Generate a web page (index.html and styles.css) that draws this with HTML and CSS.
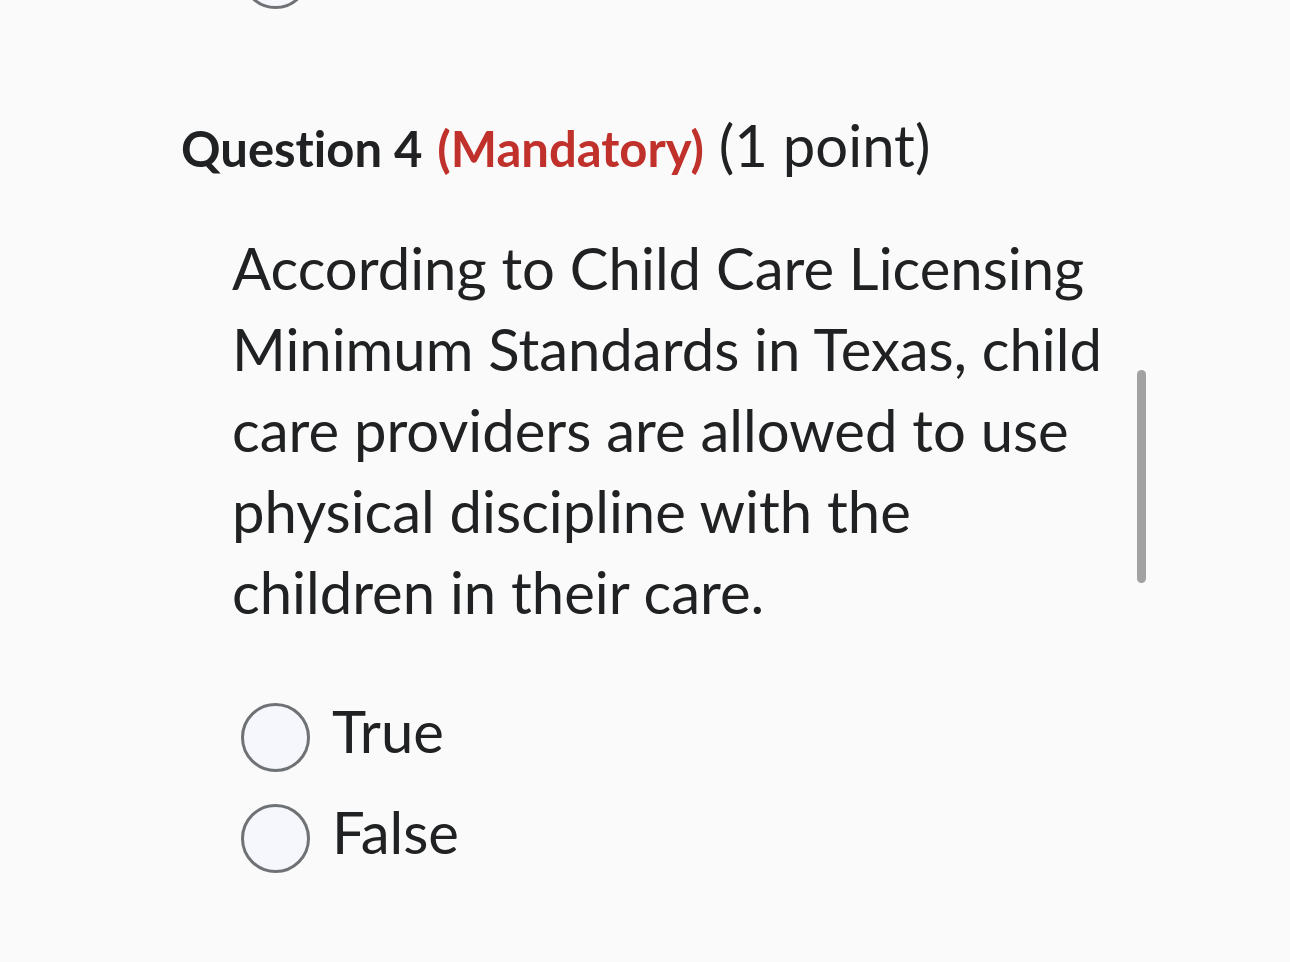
FILE: index.html
```html
<!DOCTYPE html>
<html>
<head>
<meta charset="utf-8">
<link rel="stylesheet" href="styles.css">
</head>
<body>
<div class="page">
  <div class="prev-option"><span class="radio"></span></div>
  <section class="question">
    <h2 class="q-title"><span class="q-label">Question 4</span> <span class="q-mand">(Mandatory)</span> <span class="q-points">(1 point)</span></h2>
    <p class="q-text">According to Child Care Licensing Minimum Standards in Texas, child care providers are allowed to use physical discipline with the children in their care.</p>
    <div class="options">
      <label class="option"><span class="radio"></span><span class="opt-text">True</span></label>
      <label class="option"><span class="radio"></span><span class="opt-text">False</span></label>
    </div>
  </section>
  <div class="scrollbar"></div>
</div>
</body>
</html>
```
FILE: styles.css
```css
html, body {
  margin: 0;
  padding: 0;
  background: #fafafa;
}
body {
  font-family: Lato, "Open Sans", sans-serif;
  color: #202122;
  font-variant-ligatures: none;
}
.page {
  position: relative;
  width: 1290px;
  height: 962px;
  overflow: hidden;
}
.prev-option {
  margin-top: -60px;
  padding-left: 241px;
  height: 69px;
}
.radio {
  display: block;
  box-sizing: border-box;
  width: 69px;
  height: 69px;
  border-radius: 50%;
  border: 3px solid #6f7274;
  background: #f5f7fd;
  flex: none;
}
.question {
  padding-left: 181px;
}
.q-title {
  margin: 96px 0 0;
  font-weight: 400;
  font-size: 58px;
  line-height: 80px;
  white-space: nowrap;
}
.q-label {
  font-weight: 700;
  font-size: 49px;
}
.q-mand {
  font-weight: 700;
  font-size: 49px;
  color: #c0312c;
}
.q-points {
  font-size: 58px;
}
.q-text {
  margin: 39px 0 0 51px;
  width: 890px;
  font-size: 58px;
  line-height: 81px;
}
.options {
  margin: 64px 0 0 60px;
  display: flex;
  flex-direction: column;
  gap: 19px;
}
.option {
  display: flex;
  align-items: center;
  gap: 22px;
}
.opt-text {
  font-size: 58px;
  line-height: 70px;
  margin-bottom: 12px;
}
.scrollbar {
  position: absolute;
  left: 1137px;
  top: 370px;
  width: 9px;
  height: 213px;
  border-radius: 5px;
  background: #a2a2a2;
}
```
